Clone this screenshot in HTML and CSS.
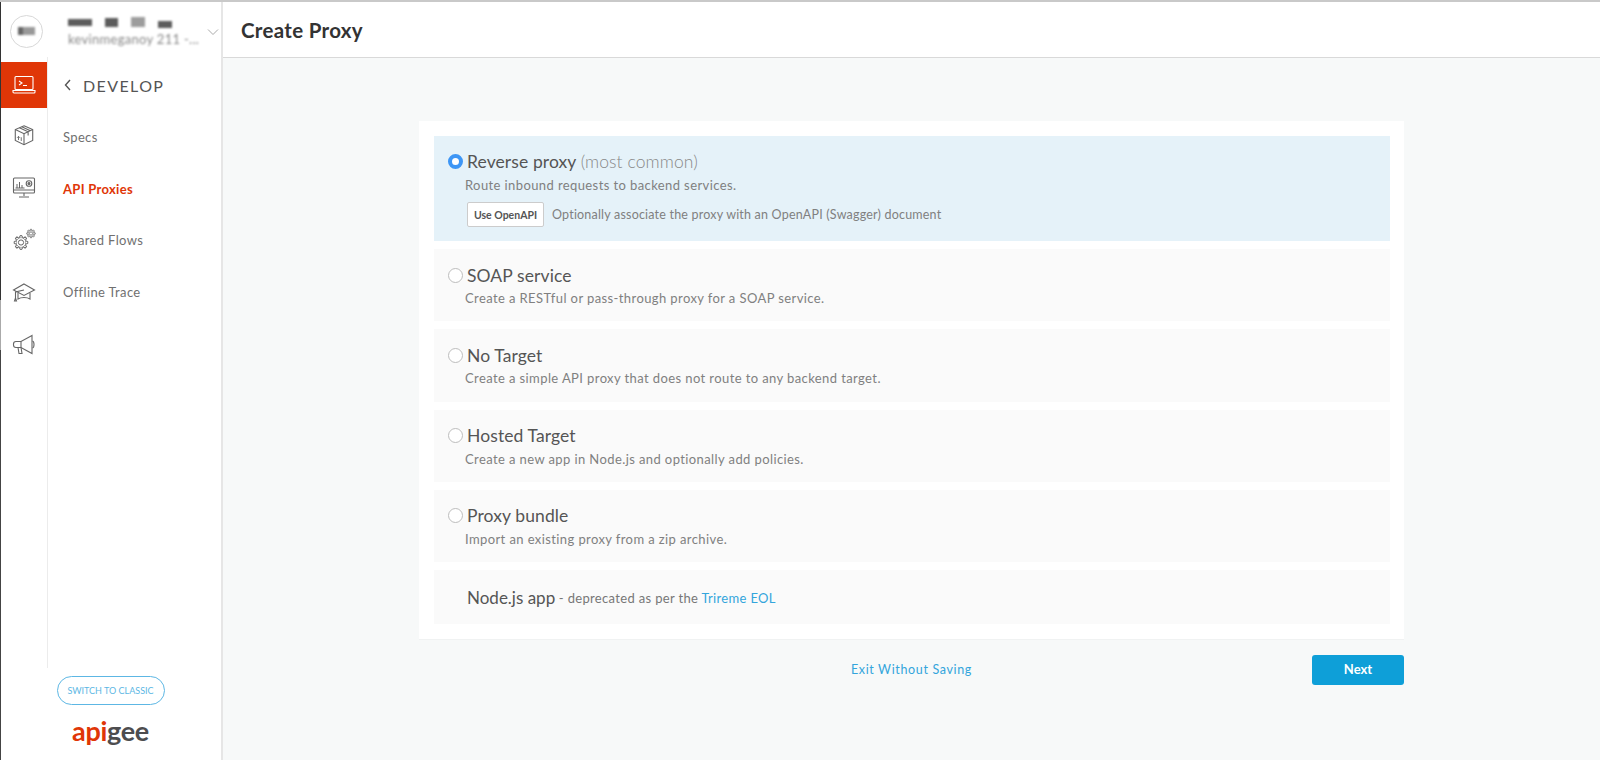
FILE: index.html
```html
<!DOCTYPE html>
<html lang="en">
<head>
<meta charset="utf-8">
<title>Create Proxy</title>
<link rel="stylesheet" href="styles.css">
</head>
<body>
<div class="app">
  <aside class="sidebar">
    <div class="org">
      <div class="avatar"><span class="avatar-mark"></span></div>
      <div class="org-text">
        <div class="org-name"><i class="b1"></i><i class="b2"></i><i class="b3"></i><i class="b4"></i></div>
        <div class="org-sub">kevinmeganoy 211 -...</div>
      </div>
      <svg class="chev" width="12" height="8" viewBox="0 0 12 8"><path d="M1 1.500l5 5 5-5" fill="none" stroke="#aaa" stroke-width="1"/></svg>
    </div>
    <div class="nav-wrap">
      <nav class="rail">
        <a class="rail-item active">
          <svg width="24" height="20" viewBox="0 0 24 20" fill="none" stroke="#fff" stroke-width="1.100"><rect x="3" y="1.500" width="18" height="13" rx="1"/><path d="M1 15.500h22v1.500a1 1 0 0 1-1 1H2a1 1 0 0 1-1-1z"/><path d="M7 6l3 2-3 2M11 10.500h4"/></svg>
        </a>
        <a class="rail-item">
          <svg width="22" height="22" viewBox="0 0 24 24" fill="none" stroke="#666" stroke-width="1.200"><path d="M12 2l9.500 4v12L12 22.500 2.500 18V6z"/><path d="M2.500 6L12 10.500 21.500 6M12 10.500v12M7 4l9.500 4.500v4M9.500 3l9.500 4.300"/><path d="M6 13.500v4M4.500 15l1.500-1.500L7.500 15M9 14.500v4" stroke-width="1"/></svg>
        </a>
        <a class="rail-item">
          <svg width="24" height="24" viewBox="0 0 24 24" fill="none" stroke="#666" stroke-width="1.100"><rect x="1.500" y="2" width="21" height="15" rx="1"/><path d="M1.500 14h21M12 17v3M7 21h10"/><path d="M5 12V8M7.500 12V6M10 12V9M12.500 12h-9" stroke-width="1"/><circle cx="17" cy="7.500" r="2.800"/><circle cx="17" cy="7.500" r="1" fill="#666"/></svg>
        </a>
        <a class="rail-item">
          <svg width="24" height="24" viewBox="0 0 24 24" fill="none" stroke="#666" stroke-width="1">
            <g transform="translate(9 14.500)">
              <circle r="5"/><circle r="2.600"/>
              <path id="t" d="M-1.500-4.900L-1-6.800H1L1.500-4.900" fill="#fff"/>
              <use href="#t" transform="rotate(45)"/><use href="#t" transform="rotate(90)"/><use href="#t" transform="rotate(135)"/><use href="#t" transform="rotate(180)"/><use href="#t" transform="rotate(225)"/><use href="#t" transform="rotate(270)"/><use href="#t" transform="rotate(315)"/>
            </g>
            <g transform="translate(19 5.500) scale(.62)" stroke-width="1.300">
              <circle r="5"/><circle r="2.600"/>
              <use href="#t"/><use href="#t" transform="rotate(45)"/><use href="#t" transform="rotate(90)"/><use href="#t" transform="rotate(135)"/><use href="#t" transform="rotate(180)"/><use href="#t" transform="rotate(225)"/><use href="#t" transform="rotate(270)"/><use href="#t" transform="rotate(315)"/>
            </g>
          </svg>
        </a>
        <a class="rail-item">
          <svg width="24" height="22" viewBox="0 0 24 22" fill="none" stroke="#666" stroke-width="1.100"><path d="M12 2l10.500 6L12 13.500 1.500 8z"/><path d="M6 11v6c3-2 9-2 12 0v-6"/><path d="M12 8l-8.500 2v6"/><path d="M2.500 19l1-3 1 3z"/></svg>
        </a>
        <a class="rail-item">
          <svg width="24" height="24" viewBox="0 0 24 24" fill="none" stroke="#666" stroke-width="1.100"><path d="M20 2.500L9 8.500H4a2.500 2.500 0 0 0-2.500 2.500v1A2.500 2.500 0 0 0 4 14.500h5l11 6z"/><path d="M9 8.500v6M6 14.500l1 6h3l-1-6M20.500 8c2 .6 2 6.400 0 7"/></svg>
        </a>
      </nav>
      <div class="subnav">
        <div class="subnav-title">
          <svg width="7" height="12" viewBox="0 0 7 12"><path d="M6 1L1.500 6 6 11" fill="none" stroke="#555" stroke-width="1.400"/></svg>
          <span>DEVELOP</span>
        </div>
        <a class="subnav-item">Specs</a>
        <a class="subnav-item current">API Proxies</a>
        <a class="subnav-item">Shared Flows</a>
        <a class="subnav-item">Offline Trace</a>
      </div>
    </div>
    <div class="side-foot">
      <a class="classic">SWITCH TO CLASSIC</a>
      <div class="logo"><span class="logo-red">api</span><span class="logo-gray">gee</span></div>
    </div>
  </aside>
  <div class="main">
    <header class="topbar"><h1>Create Proxy</h1></header>
    <section class="content">
      <div class="card">
        <div class="option selected">
          <div class="opt-head"><span class="radio on"></span><span class="opt-title">Reverse proxy <span class="muted">(most common)</span></span></div>
          <p class="opt-desc">Route inbound requests to backend services.</p>
          <div class="opt-extra"><button class="mini">Use OpenAPI</button><span>Optionally associate the proxy with an OpenAPI (Swagger) document</span></div>
        </div>
        <div class="option">
          <div class="opt-head"><span class="radio"></span><span class="opt-title">SOAP service</span></div>
          <p class="opt-desc">Create a RESTful or pass-through proxy for a SOAP service.</p>
        </div>
        <div class="option">
          <div class="opt-head"><span class="radio"></span><span class="opt-title">No Target</span></div>
          <p class="opt-desc">Create a simple API proxy that does not route to any backend target.</p>
        </div>
        <div class="option">
          <div class="opt-head"><span class="radio"></span><span class="opt-title">Hosted Target</span></div>
          <p class="opt-desc">Create a new app in Node.js and optionally add policies.</p>
        </div>
        <div class="option">
          <div class="opt-head"><span class="radio"></span><span class="opt-title">Proxy bundle</span></div>
          <p class="opt-desc">Import an existing proxy from a zip archive.</p>
        </div>
        <div class="option node">
          <span class="opt-title node-title">Node.js app</span><span class="node-note"> - deprecated as per the <a class="link">Trireme EOL</a></span>
        </div>
      </div>
      <div class="actions">
        <a class="exit">Exit Without Saving</a>
        <button class="next">Next</button>
      </div>
    </section>
  </div>
</div>
</body>
</html>
```
FILE: styles.css
```css
* { box-sizing: border-box; }
html, body { margin: 0; height: 100%; }
body {
  font-family: Lato, "Liberation Sans", sans-serif;
  background: #f7f9f9;
  color: #555;
  overflow: hidden;
}
.app {
  display: flex;
  height: 760px;
  border-top: 2px solid #c9c9c9;
  padding-left: 1px;
  background-color: #f7f9f9;
  background-image: linear-gradient(#333 0 298px, #aaa 298px 348px, #444 348px);
  background-size: 1px 100%;
  background-repeat: no-repeat;
}
.sidebar {
  width: 222px;
  flex: none;
  display: flex;
  flex-direction: column;
  background: #fff;
  border-right: 2px solid #e6e6e6;
}
.org {
  height: 55px;
  flex: none;
  display: flex;
  align-items: center;
  padding: 3px 0 0 9px;
  position: relative;
}
.avatar {
  width: 33px;
  height: 33px;
  border: 1px solid #d8d8d8;
  border-radius: 50%;
  display: flex;
  align-items: center;
  justify-content: center;
  flex: none;
}
.avatar-mark {
  width: 17px;
  height: 8px;
  background: linear-gradient(90deg, #666 0 30%, #999 30% 100%);
  filter: blur(1px);
}
.org-text { margin-left: 25px; width: 135px; }
.org-name { display: flex; gap: 13px; height: 12px; align-items: center; filter: blur(1.300px); }
.org-name i { display: block; background: #5c5c5c; }
.b1 { width: 24px; height: 7px; }
.b2 { width: 13px; height: 9px; }
.b3 { width: 14px; height: 10px; opacity: .6; }
.b4 { width: 14px; height: 7px; margin-top: 5px; }
.org-sub { font-size: 13px; line-height: 14px; margin-top: 4px; letter-spacing: .3px; color: #888; white-space: nowrap; filter: blur(1px); }
.chev { position: absolute; right: 2px; top: 26px; }
.nav-wrap { flex: 1; display: flex; min-height: 0; }
.rail {
  width: 47px;
  flex: none;
  border-right: 1px solid #ececec;
  padding-top: 5px;
  display: flex;
  flex-direction: column;
  height: 611px;
}
.rail-item {
  height: 46px;
  margin-bottom: 6.500px;
  flex: none;
  display: flex;
  align-items: center;
  justify-content: center;
}
.rail-item.active { background: #e03607; margin-bottom: 4px; }
.subnav { flex: 1; padding-top: 5px; }
.subnav-title {
  height: 46px;
  display: flex;
  align-items: center;
  gap: 12px;
  padding-left: 16px;
  font-size: 16px;
  letter-spacing: 1.400px;
  color: #555;
  margin-bottom: 3px;
}
.subnav-item {
  display: flex;
  align-items: center;
  height: 51.700px;
  padding-left: 15px;
  font-size: 13px;
  letter-spacing: .35px;
  color: #707070;
}
.subnav-item.current { color: #e03607; font-weight: 700; letter-spacing: .3px; }
.side-foot {
  flex: none;
  height: 92px;
  display: flex;
  flex-direction: column;
  align-items: center;
  padding: 8px 1px 0 0;
}
.classic {
  width: 108px;
  height: 29px;
  border: 1px solid #5db7e4;
  border-radius: 15px;
  font-size: 9px;
  display: flex;
  align-items: center;
  justify-content: center;
  color: #5db7e4;
  white-space: nowrap;
}
.logo {
  font-family: Lato, "Liberation Sans", sans-serif;
  font-size: 27px;
  font-weight: 700;
  line-height: 30px;
  margin-top: 11px;
  letter-spacing: -.3px;
}
.logo-red { color: #e03607; }
.logo-gray { color: #4d4d4f; }
.main { flex: 1; min-width: 0; display: flex; flex-direction: column; }
.topbar {
  height: 56px;
  flex: none;
  background: #fff;
  border-bottom: 1px solid #d9d9d9;
  display: flex;
  align-items: center;
  padding-left: 18px;
}
.topbar h1 { margin: 0; font-size: 20.500px; font-weight: 700; color: #333; letter-spacing: .3px; }
.content { padding: 63px 0 0 196px; }
.card {
  width: 985px;
  background: #fff;
  padding: 15px 14px 15px 15px;
  display: flex;
  flex-direction: column;
  gap: 8px;
  border-bottom: 1px solid #f0f2f2;
}
.option {
  height: 72.330px;
  background: #fafafa;
  padding: 16px 0 0 14px;
}
.option.selected { height: 105px; padding-top: 15px; background: #e5f2f9; }
.opt-head { display: flex; align-items: center; height: 20px; }
.radio {
  width: 15px;
  height: 15px;
  flex: none;
  border-radius: 50%;
  border: 1px solid #bdbdbd;
  background: #fff;
  margin-right: 4px;
}
.radio.on { border: 4px solid #3d96f5; }
.opt-title { font-size: 17.500px; color: #555; letter-spacing: .1px; }
.muted { color: #888; font-weight: 300; }
.opt-desc {
  margin: 4px 0 0 17px;
  font-size: 13px;
  line-height: 18px;
  letter-spacing: .4px;
  color: #808080;
}
.selected .opt-desc { margin-top: 5px; }
.opt-extra {
  display: flex;
  align-items: center;
  margin: 8px 0 0 19px;
  font-size: 12.500px;
  letter-spacing: .2px;
  color: #808080;
  gap: 8px;
}
.mini {
  width: 77px;
  height: 25px;
  padding: 0;
  font: 700 10.500px Lato, "Liberation Sans", sans-serif;
  color: #555;
  background: #fff;
  border: 1px solid #ccc;
  border-radius: 2px;
}
.node { height: 54px; padding: 0 0 0 33px; display: flex; align-items: center; white-space: pre; }
.node-title { font-size: 17px; letter-spacing: 0; }
.node-note { font-size: 13px; letter-spacing: .33px; color: #777; margin-top: 2px; }
.link { color: #33a5dc; }
.actions {
  width: 985px;
  margin-top: 15px;
  display: flex;
  align-items: center;
  justify-content: flex-end;
}
.exit {
  font-size: 12.500px;
  letter-spacing: .65px;
  color: #33a5dc;
  margin: -2px 340px 0 0;
}
.next {
  width: 92px;
  height: 30px;
  border: 0;
  border-radius: 3px;
  background: #0e9fd8;
  color: #fff;
  padding: 0 0 2px;
  font: 700 13px Lato, "Liberation Sans", sans-serif;
}
```
